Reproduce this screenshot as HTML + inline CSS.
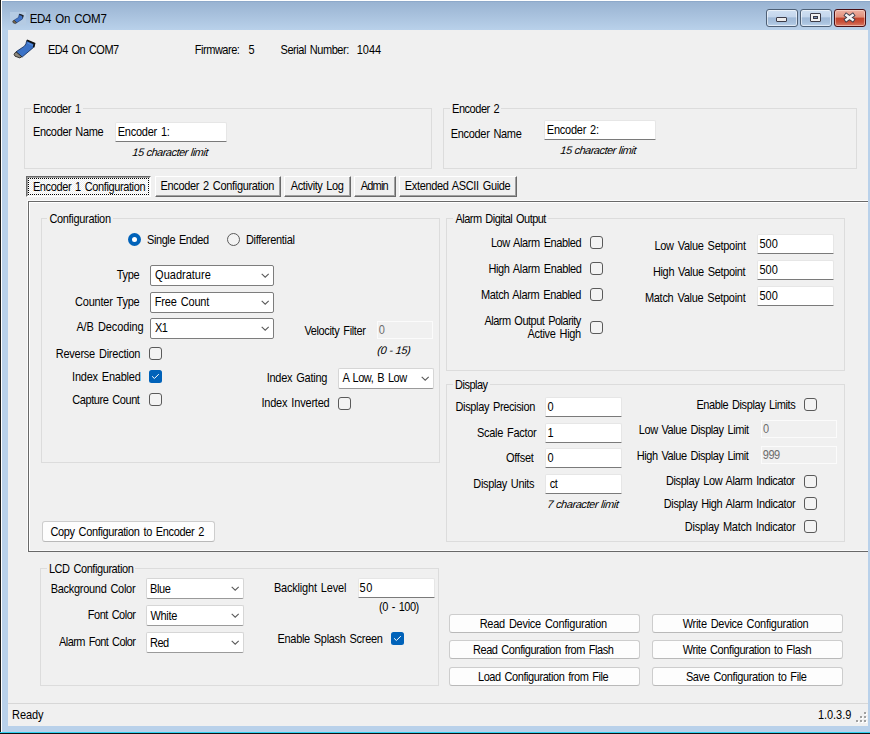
<!DOCTYPE html><html><head><meta charset="utf-8"><style>
html,body{margin:0;padding:0}
body{width:870px;height:734px;position:relative;overflow:hidden;background:#b9d1ea;font-family:"Liberation Sans",sans-serif}
.t{position:absolute;font-family:"Liberation Sans",sans-serif;font-size:11px;line-height:13px;transform:scaleY(1.12);transform-origin:0 10.3px;letter-spacing:-0.4px;word-spacing:1.2px;white-space:nowrap;color:#000}
.g{position:absolute;box-sizing:border-box;border:1px solid #dcdcdc}
.tb{position:absolute;box-sizing:border-box;background:#fff;border:1px solid #e6e6e6;border-bottom:1px solid #7a7a7a;border-radius:2px 2px 1px 1px}
.tbd{position:absolute;box-sizing:border-box;background:#f0f0f0;border:1px solid #fbfbfb}
.cb{position:absolute;box-sizing:border-box;background:#fff;border:1px solid #7d7d7d;border-radius:2px}
.cbl{position:absolute;box-sizing:border-box;background:#fff;border:1px solid #d6d6d6;border-bottom-color:#9a9a9a;border-radius:2px}
.btn{position:absolute;box-sizing:border-box;background:#fdfdfd;border:1px solid #cdcdcd;border-bottom-color:#b9b9b9;border-radius:3px}
.tab{position:absolute;box-sizing:border-box;background:#f0f0f0;border-top:1px solid #fff;border-left:1px solid #fff;border-right:1px solid #696969;border-bottom:1px solid #696969;box-shadow:inset -1px -1px 0 #a0a0a0}
.tabp{position:absolute;box-sizing:border-box;background:repeating-conic-gradient(#ffffff 0 25%, #ededed 0 50%) 0 0/2px 2px;border-top:1px solid #696969;border-left:1px solid #696969;border-right:1px solid #fff;border-bottom:1px solid #fff;box-shadow:inset 1px 1px 0 #a0a0a0}
.focus{position:absolute;box-sizing:border-box;border:1px dotted #000}
</style></head><body>
<div style="position:absolute;left:0px;top:0px;width:870px;height:30px;background:linear-gradient(#97b1d0,#b9d1ea)"></div>
<div style="position:absolute;left:0px;top:0px;width:870px;height:1px;background:#fff"></div>
<div style="position:absolute;left:0px;top:1px;width:870px;height:1px;background:#8ea9ca"></div>
<div style="position:absolute;left:0px;top:0px;width:1px;height:734px;background:#1c1c1c"></div>
<div style="position:absolute;left:1px;top:1px;width:1px;height:733px;background:#fff"></div>
<div style="position:absolute;left:0px;top:732px;width:870px;height:1px;background:#2fd0f0"></div>
<div style="position:absolute;left:0px;top:733px;width:870px;height:1px;background:#111"></div>
<div style="position:absolute;left:8px;top:30px;width:860px;height:696px;background:#f0f0f0"></div>
<div style="position:absolute;left:10px;top:12px;width:16px;height:13px;background:#b5cbe3"></div>
<svg style="position:absolute;left:8px;top:9px" width="20" height="19" viewBox="0 0 20 19"><path d="M11.3 5.3 L15 6.6 L14.4 10 L8.6 13.8 L6.2 11.2 L10.6 8.4 Z" fill="#3f73c8" stroke="#1f3f78" stroke-width="0.7"/><path d="M11.3 5.2 L15 6.6 L14.6 8.5" fill="none" stroke="#222" stroke-width="1.2"/><path d="M6.2 11.2 L8.6 13.8 L7.2 14.6 L5 13.6 L4.8 12 Z" fill="#7a6a50" stroke="#222" stroke-width="0.6"/></svg>
<div class="t" style="left:29.64px;top:12.7px;letter-spacing:-0.258px;font-size:11.5px;text-shadow:none;">ED4 On COM7</div>
<div style="position:absolute;left:766px;top:9px;width:32px;height:18px;box-sizing:border-box;border:1px solid #4e6076;border-radius:3px;background:linear-gradient(#d0e0f2 0%,#c3d6ec 45%,#9fb9d7 48%,#a9c2de 80%,#bcd3ec 100%);box-shadow:inset 0 0 0 1px rgba(255,255,255,0.55)"></div>
<div style="position:absolute;left:776px;top:17px;width:11px;height:5px;box-sizing:border-box;border:1px solid #3c3c48;background:#ececec;border-radius:1px"></div>
<div style="position:absolute;left:800px;top:9px;width:32px;height:18px;box-sizing:border-box;border:1px solid #4e6076;border-radius:3px;background:linear-gradient(#d0e0f2 0%,#c3d6ec 45%,#9fb9d7 48%,#a9c2de 80%,#bcd3ec 100%);box-shadow:inset 0 0 0 1px rgba(255,255,255,0.55)"></div>
<div style="position:absolute;left:810px;top:13px;width:11px;height:9px;box-sizing:border-box;border:1px solid #3c3c48;background:#f2f2f2;border-radius:1px"></div>
<div style="position:absolute;left:813px;top:16px;width:5px;height:3px;box-sizing:border-box;border:1px solid #3c3c48;background:#7d95ba"></div>
<div style="position:absolute;left:834px;top:9px;width:32px;height:18px;box-sizing:border-box;border:1px solid #4a0f14;border-radius:3px;background:linear-gradient(#eeb1a2 0%,#e08f7b 45%,#c3432a 50%,#c9503a 75%,#d97a66 100%);box-shadow:inset 0 0 0 1px rgba(255,230,220,0.5)"></div>
<svg style="position:absolute;left:843px;top:12px" width="13" height="11" viewBox="0 0 13 11"><path d="M3.4 3.2 L9.6 7.8 M9.6 3.2 L3.4 7.8" stroke="#3a3a48" stroke-width="4.2" stroke-linecap="square"/><path d="M3.4 3.2 L9.6 7.8 M9.6 3.2 L3.4 7.8" stroke="#f4f4f4" stroke-width="2.5" stroke-linecap="square"/></svg>
<svg style="position:absolute;left:8px;top:34px" width="32" height="28" viewBox="0 0 32 28"><path d="M18.8 6.4 L26.4 9.6 L25.5 13.4 L14.2 23 L8 17.8 L16.6 12 Q18.2 10 18.8 6.4 Z" fill="#3b72c6" stroke="#102a55" stroke-width="0.8"/><path d="M18.9 6.3 L26.5 9.6 L25.6 13.3" fill="none" stroke="#111" stroke-width="1.7"/><path d="M19.5 9 L25 11.5" stroke="#5d92e2" stroke-width="0.9" fill="none"/><path d="M8 17.8 L13.8 22.8 L11.8 23.9 L7 22.2 L6 20.2 Z" fill="#8d887c" stroke="#1a1a1a" stroke-width="0.8"/></svg>
<div class="t" style="left:48.00px;top:43.8px;letter-spacing:-0.520px;">ED4 On COM7</div>
<div class="t" style="left:194.80px;top:43.8px;letter-spacing:-0.475px;">Firmware:</div>
<div class="t" style="left:248.42px;top:43.8px;letter-spacing:0.800px;">5</div>
<div class="t" style="left:280.50px;top:43.8px;letter-spacing:-0.442px;">Serial Number:</div>
<div class="t" style="left:356.70px;top:43.8px;letter-spacing:-0.000px;">1044</div>
<div class="g" style="left:24px;top:108px;width:408px;height:61px"></div>
<div class="t" style="left:33.00px;top:102.8px;letter-spacing:-0.416px;background:#f0f0f0;padding:0 2px;margin-left:-2px;">Encoder 1</div>
<div class="t" style="left:33.00px;top:125.8px;letter-spacing:-0.360px;">Encoder Name</div>
<div class="tb" style="left:115px;top:122px;width:112px;height:20px"></div>
<div class="t" style="left:117.70px;top:126.1px;letter-spacing:-0.242px;">Encoder 1:</div>
<div class="t" style="left:131.60px;top:146.3px;letter-spacing:-0.519px;font-style:italic;word-spacing:0.5px;transform:skewX(-6deg);">15 character limit</div>
<div class="g" style="left:443px;top:108px;width:414px;height:61px"></div>
<div class="t" style="left:452.00px;top:102.8px;letter-spacing:-0.451px;background:#f0f0f0;padding:0 2px;margin-left:-2px;">Encoder 2</div>
<div class="t" style="left:450.70px;top:127.8px;letter-spacing:-0.311px;">Encoder Name</div>
<div class="tb" style="left:544px;top:120px;width:112px;height:20px"></div>
<div class="t" style="left:546.80px;top:124.1px;letter-spacing:-0.245px;">Encoder 2:</div>
<div class="t" style="left:559.70px;top:144.2px;letter-spacing:-0.520px;font-style:italic;word-spacing:0.5px;transform:skewX(-6deg);">15 character limit</div>
<div style="position:absolute;left:27px;top:200px;width:841px;height:1px;background:#fbfbfb"></div>
<div style="position:absolute;left:27px;top:200px;width:1px;height:352px;background:#fbfbfb"></div>
<div style="position:absolute;left:28px;top:201px;width:840px;height:1px;background:#696969"></div>
<div style="position:absolute;left:28px;top:201px;width:1px;height:351px;background:#696969"></div>
<div style="position:absolute;left:28px;top:551px;width:840px;height:1px;background:#696969"></div>
<div style="position:absolute;left:29px;top:202px;width:839px;height:1px;background:#fff"></div>
<div style="position:absolute;left:29px;top:202px;width:1px;height:349px;background:#fff"></div>
<div style="position:absolute;left:29px;top:550px;width:839px;height:1px;background:#fafafa"></div>
<div class="tabp" style="left:26px;top:176px;width:125px;height:21px"></div>
<div class="focus" style="left:28px;top:178px;width:121px;height:17px"></div>
<div class="t" style="left:32.90px;top:181.0px;letter-spacing:-0.382px;">Encoder 1 Configuration</div>
<div class="tab" style="left:155px;top:176px;width:126px;height:21px"></div>
<div class="t" style="left:160.50px;top:179.9px;letter-spacing:-0.326px;">Encoder 2 Configuration</div>
<div class="tab" style="left:284px;top:176px;width:67px;height:21px"></div>
<div class="t" style="left:290.80px;top:179.9px;letter-spacing:-0.401px;">Activity Log</div>
<div class="tab" style="left:354px;top:176px;width:42px;height:21px"></div>
<div class="t" style="left:360.70px;top:179.9px;letter-spacing:-0.800px;">Admin</div>
<div class="tab" style="left:399px;top:176px;width:118px;height:21px"></div>
<div class="t" style="left:404.80px;top:179.9px;letter-spacing:-0.348px;">Extended ASCII Guide</div>
<div class="g" style="left:41px;top:218px;width:399px;height:245px"></div>
<div class="t" style="left:49.40px;top:213.0px;letter-spacing:-0.316px;background:#f0f0f0;padding:0 2px;margin-left:-2px;">Configuration</div>
<svg style="position:absolute;left:128px;top:233px" width="13" height="13" viewBox="0 0 13 13"><circle cx="6.5" cy="6.5" r="6.5" fill="#0062b9"/><circle cx="6.5" cy="6.5" r="2.5" fill="#fff"/></svg>
<div class="t" style="left:147.00px;top:233.8px;letter-spacing:-0.417px;">Single Ended</div>
<svg style="position:absolute;left:227px;top:233px" width="13" height="13" viewBox="0 0 13 13"><circle cx="6.5" cy="6.5" r="6" fill="#f3f3f3" stroke="#5a5a5a" stroke-width="1"/></svg>
<div class="t" style="left:245.90px;top:233.8px;letter-spacing:-0.295px;">Differential</div>
<div class="t" style="left:116.70px;top:269.0px;letter-spacing:-0.267px;">Type</div>
<div class="cb" style="left:150px;top:265px;width:124px;height:21px"></div>
<div class="t" style="left:155.10px;top:268.6px;letter-spacing:0.002px;">Quadrature</div>
<div style="position:absolute;left:261px;top:273px;line-height:0"><svg width="9" height="6" viewBox="0 0 9 6"><path d="M0.7 0.9 L4.2 4.2 L7.7 0.9" fill="none" stroke="#5a5a5a" stroke-width="1.1"/></svg></div>
<div class="t" style="left:75.00px;top:295.8px;letter-spacing:-0.214px;">Counter Type</div>
<div class="cb" style="left:150px;top:292px;width:124px;height:21px"></div>
<div class="t" style="left:154.70px;top:295.6px;letter-spacing:-0.176px;">Free Count</div>
<div style="position:absolute;left:261px;top:300px;line-height:0"><svg width="9" height="6" viewBox="0 0 9 6"><path d="M0.7 0.9 L4.2 4.2 L7.7 0.9" fill="none" stroke="#5a5a5a" stroke-width="1.1"/></svg></div>
<div class="t" style="left:76.40px;top:320.6px;letter-spacing:-0.110px;">A/B Decoding</div>
<div class="cb" style="left:150px;top:318px;width:124px;height:21px"></div>
<div class="t" style="left:155.10px;top:321.6px;letter-spacing:-0.580px;">X1</div>
<div style="position:absolute;left:261px;top:326px;line-height:0"><svg width="9" height="6" viewBox="0 0 9 6"><path d="M0.7 0.9 L4.2 4.2 L7.7 0.9" fill="none" stroke="#5a5a5a" stroke-width="1.1"/></svg></div>
<div class="t" style="left:304.40px;top:325.3px;letter-spacing:-0.361px;">Velocity Filter</div>
<div class="tbd" style="left:377px;top:321px;width:56px;height:18px"></div>
<div class="t" style="left:378.70px;top:324.0px;letter-spacing:-0.400px;color:#6d6d6d;">0</div>
<div class="t" style="left:376.60px;top:344.0px;letter-spacing:-0.448px;font-style:italic;word-spacing:0.5px;transform:skewX(-6deg);">(0 - 15)</div>
<div class="t" style="left:55.80px;top:348.0px;letter-spacing:-0.253px;">Reverse Direction</div>
<svg style="position:absolute;left:149px;top:347px" width="13" height="13" viewBox="0 0 13 13"><rect x="0.5" y="0.5" width="12" height="12" rx="2.5" fill="#f3f3f3" stroke="#5a5a5a" stroke-width="1"/></svg>
<div class="t" style="left:72.10px;top:371.0px;letter-spacing:-0.233px;">Index Enabled</div>
<svg style="position:absolute;left:149px;top:370px" width="13" height="13" viewBox="0 0 13 13"><rect x="0" y="0" width="13" height="13" rx="2.5" fill="#0062b9"/><path d="M3.1 6.3 L5.4 8.5 L9.8 4.1" fill="none" stroke="#fff" stroke-width="1"/></svg>
<div class="t" style="left:72.28px;top:394.1px;letter-spacing:-0.425px;">Capture Count</div>
<svg style="position:absolute;left:149px;top:393px" width="13" height="13" viewBox="0 0 13 13"><rect x="0.5" y="0.5" width="12" height="12" rx="2.5" fill="#f3f3f3" stroke="#5a5a5a" stroke-width="1"/></svg>
<div class="t" style="left:266.70px;top:372.4px;letter-spacing:-0.261px;">Index Gating</div>
<div class="cbl" style="left:338px;top:368px;width:96px;height:21px"></div>
<div class="t" style="left:342.40px;top:372.4px;letter-spacing:-0.437px;">A Low, B Low</div>
<div style="position:absolute;left:421px;top:376px;line-height:0"><svg width="9" height="6" viewBox="0 0 9 6"><path d="M0.7 0.9 L4.2 4.2 L7.7 0.9" fill="none" stroke="#5a5a5a" stroke-width="1.1"/></svg></div>
<div class="t" style="left:261.40px;top:397.0px;letter-spacing:-0.197px;">Index Inverted</div>
<svg style="position:absolute;left:338px;top:397px" width="13" height="13" viewBox="0 0 13 13"><rect x="0.5" y="0.5" width="12" height="12" rx="2.5" fill="#f3f3f3" stroke="#5a5a5a" stroke-width="1"/></svg>
<div class="btn" style="left:42px;top:521px;width:173px;height:21px"></div>
<div class="t" style="left:50.40px;top:526.0px;letter-spacing:-0.347px;">Copy Configuration to Encoder 2</div>
<div class="g" style="left:446px;top:218px;width:399px;height:153px"></div>
<div class="t" style="left:455.40px;top:213.0px;letter-spacing:-0.515px;background:#f0f0f0;padding:0 2px;margin-left:-2px;">Alarm Digital Output</div>
<div class="t" style="left:490.90px;top:237.4px;letter-spacing:-0.406px;">Low Alarm Enabled</div>
<svg style="position:absolute;left:590px;top:236px" width="13" height="13" viewBox="0 0 13 13"><rect x="0.5" y="0.5" width="12" height="12" rx="2.5" fill="#f3f3f3" stroke="#5a5a5a" stroke-width="1"/></svg>
<div class="t" style="left:488.40px;top:263.3px;letter-spacing:-0.358px;">High Alarm Enabled</div>
<svg style="position:absolute;left:590px;top:262px" width="13" height="13" viewBox="0 0 13 13"><rect x="0.5" y="0.5" width="12" height="12" rx="2.5" fill="#f3f3f3" stroke="#5a5a5a" stroke-width="1"/></svg>
<div class="t" style="left:480.90px;top:289.0px;letter-spacing:-0.358px;">Match Alarm Enabled</div>
<svg style="position:absolute;left:590px;top:288px" width="13" height="13" viewBox="0 0 13 13"><rect x="0.5" y="0.5" width="12" height="12" rx="2.5" fill="#f3f3f3" stroke="#5a5a5a" stroke-width="1"/></svg>
<div class="t" style="left:484.40px;top:315.4px;letter-spacing:-0.500px;">Alarm Output Polarity</div>
<div class="t" style="left:527.40px;top:328.1px;letter-spacing:-0.300px;">Active High</div>
<svg style="position:absolute;left:590px;top:321px" width="13" height="13" viewBox="0 0 13 13"><rect x="0.5" y="0.5" width="12" height="12" rx="2.5" fill="#f3f3f3" stroke="#5a5a5a" stroke-width="1"/></svg>
<div class="t" style="left:654.40px;top:240.3px;letter-spacing:-0.282px;">Low Value Setpoint</div>
<div class="tb" style="left:757px;top:234px;width:77px;height:20px"></div>
<div class="t" style="left:759.40px;top:238.4px;letter-spacing:0.100px;">500</div>
<div class="t" style="left:652.90px;top:266.2px;letter-spacing:-0.335px;">High Value Setpoint</div>
<div class="tb" style="left:757px;top:260px;width:77px;height:20px"></div>
<div class="t" style="left:759.40px;top:264.4px;letter-spacing:0.100px;">500</div>
<div class="t" style="left:644.90px;top:292.2px;letter-spacing:-0.279px;">Match Value Setpoint</div>
<div class="tb" style="left:757px;top:286px;width:77px;height:20px"></div>
<div class="t" style="left:759.40px;top:290.4px;letter-spacing:0.100px;">500</div>
<div class="g" style="left:446px;top:384px;width:399px;height:158px"></div>
<div class="t" style="left:455.00px;top:379.4px;letter-spacing:-0.500px;background:#f0f0f0;padding:0 2px;margin-left:-2px;">Display</div>
<div class="t" style="left:455.50px;top:401.3px;letter-spacing:-0.361px;">Display Precision</div>
<div class="tb" style="left:545px;top:397px;width:77px;height:20px"></div>
<div class="t" style="left:547.40px;top:401.4px;letter-spacing:-0.400px;">0</div>
<div class="t" style="left:477.00px;top:427.0px;letter-spacing:-0.292px;">Scale Factor</div>
<div class="tb" style="left:545px;top:423px;width:77px;height:20px"></div>
<div class="t" style="left:547.40px;top:427.4px;letter-spacing:-0.400px;">1</div>
<div class="t" style="left:505.90px;top:451.8px;letter-spacing:-0.240px;">Offset</div>
<div class="tb" style="left:545px;top:448px;width:77px;height:20px"></div>
<div class="t" style="left:547.40px;top:452.4px;letter-spacing:-0.400px;">0</div>
<div class="t" style="left:473.30px;top:478.0px;letter-spacing:-0.350px;">Display Units</div>
<div class="tb" style="left:545px;top:474px;width:77px;height:20px"></div>
<div class="t" style="left:549.70px;top:478.4px;letter-spacing:-0.400px;">ct</div>
<div class="t" style="left:547.00px;top:498.1px;letter-spacing:-0.445px;font-style:italic;word-spacing:0.5px;transform:skewX(-6deg);">7 character limit</div>
<div class="t" style="left:696.40px;top:398.9px;letter-spacing:-0.410px;">Enable Display Limits</div>
<svg style="position:absolute;left:804px;top:398px" width="13" height="13" viewBox="0 0 13 13"><rect x="0.5" y="0.5" width="12" height="12" rx="2.5" fill="#f3f3f3" stroke="#5a5a5a" stroke-width="1"/></svg>
<div class="t" style="left:638.80px;top:423.7px;letter-spacing:-0.427px;">Low Value Display Limit</div>
<div class="tbd" style="left:761px;top:420px;width:76px;height:18px"></div>
<div class="t" style="left:763.00px;top:423.4px;letter-spacing:-0.400px;color:#6d6d6d;">0</div>
<div class="t" style="left:636.80px;top:450.3px;letter-spacing:-0.431px;">High Value Display Limit</div>
<div class="tbd" style="left:761px;top:446px;width:76px;height:18px"></div>
<div class="t" style="left:762.70px;top:449.4px;letter-spacing:-0.400px;color:#6d6d6d;">999</div>
<div class="t" style="left:665.90px;top:474.8px;letter-spacing:-0.382px;">Display Low Alarm Indicator</div>
<svg style="position:absolute;left:804px;top:475px" width="13" height="13" viewBox="0 0 13 13"><rect x="0.5" y="0.5" width="12" height="12" rx="2.5" fill="#f3f3f3" stroke="#5a5a5a" stroke-width="1"/></svg>
<div class="t" style="left:663.80px;top:498.0px;letter-spacing:-0.369px;">Display High Alarm Indicator</div>
<svg style="position:absolute;left:804px;top:497px" width="13" height="13" viewBox="0 0 13 13"><rect x="0.5" y="0.5" width="12" height="12" rx="2.5" fill="#f3f3f3" stroke="#5a5a5a" stroke-width="1"/></svg>
<div class="t" style="left:684.80px;top:520.8px;letter-spacing:-0.268px;">Display Match Indicator</div>
<svg style="position:absolute;left:804px;top:520px" width="13" height="13" viewBox="0 0 13 13"><rect x="0.5" y="0.5" width="12" height="12" rx="2.5" fill="#f3f3f3" stroke="#5a5a5a" stroke-width="1"/></svg>
<div class="g" style="left:40px;top:568px;width:399px;height:118px"></div>
<div class="t" style="left:48.90px;top:562.6px;letter-spacing:-0.426px;background:#f0f0f0;padding:0 2px;margin-left:-2px;">LCD Configuration</div>
<div class="t" style="left:50.70px;top:582.7px;letter-spacing:-0.293px;">Background Color</div>
<div class="cbl" style="left:146px;top:578px;width:98px;height:21px"></div>
<div class="t" style="left:150.00px;top:582.6px;letter-spacing:-0.401px;">Blue</div>
<div style="position:absolute;left:230.5px;top:586px;line-height:0"><svg width="9" height="6" viewBox="0 0 9 6"><path d="M0.7 0.9 L4.2 4.2 L7.7 0.9" fill="none" stroke="#5a5a5a" stroke-width="1.1"/></svg></div>
<div class="t" style="left:87.80px;top:608.7px;letter-spacing:-0.487px;">Font Color</div>
<div class="cbl" style="left:146px;top:605px;width:98px;height:21px"></div>
<div class="t" style="left:150.40px;top:609.6px;letter-spacing:-0.300px;">White</div>
<div style="position:absolute;left:230.5px;top:613px;line-height:0"><svg width="9" height="6" viewBox="0 0 9 6"><path d="M0.7 0.9 L4.2 4.2 L7.7 0.9" fill="none" stroke="#5a5a5a" stroke-width="1.1"/></svg></div>
<div class="t" style="left:59.10px;top:635.8px;letter-spacing:-0.573px;">Alarm Font Color</div>
<div class="cbl" style="left:146px;top:632px;width:98px;height:21px"></div>
<div class="t" style="left:150.00px;top:636.6px;letter-spacing:-0.500px;">Red</div>
<div style="position:absolute;left:230.5px;top:640px;line-height:0"><svg width="9" height="6" viewBox="0 0 9 6"><path d="M0.7 0.9 L4.2 4.2 L7.7 0.9" fill="none" stroke="#5a5a5a" stroke-width="1.1"/></svg></div>
<div class="t" style="left:273.90px;top:582.1px;letter-spacing:-0.196px;">Backlight Level</div>
<div class="tb" style="left:358px;top:578px;width:77px;height:20px"></div>
<div class="t" style="left:359.40px;top:582.4px;letter-spacing:0.800px;">50</div>
<div class="t" style="left:379.10px;top:601.2px;letter-spacing:-0.475px;">(0 - 100)</div>
<div class="t" style="left:277.50px;top:633.3px;letter-spacing:-0.310px;">Enable Splash Screen</div>
<svg style="position:absolute;left:391px;top:632px" width="13" height="13" viewBox="0 0 13 13"><rect x="0" y="0" width="13" height="13" rx="2.5" fill="#0062b9"/><path d="M3.1 6.3 L5.4 8.5 L9.8 4.1" fill="none" stroke="#fff" stroke-width="1"/></svg>
<div class="btn" style="left:449px;top:614px;width:191px;height:19px"></div>
<div class="t" style="left:479.70px;top:618.3px;letter-spacing:-0.266px;">Read Device Configuration</div>
<div class="btn" style="left:449px;top:640px;width:191px;height:19px"></div>
<div class="t" style="left:473.00px;top:644.3px;letter-spacing:-0.446px;">Read Configuration from Flash</div>
<div class="btn" style="left:449px;top:667px;width:191px;height:19px"></div>
<div class="t" style="left:478.00px;top:670.9px;letter-spacing:-0.432px;">Load Configuration from File</div>
<div class="btn" style="left:652px;top:614px;width:191px;height:19px"></div>
<div class="t" style="left:682.70px;top:618.3px;letter-spacing:-0.285px;">Write Device Configuration</div>
<div class="btn" style="left:652px;top:640px;width:191px;height:19px"></div>
<div class="t" style="left:682.70px;top:644.3px;letter-spacing:-0.400px;">Write Configuration to Flash</div>
<div class="btn" style="left:652px;top:667px;width:191px;height:19px"></div>
<div class="t" style="left:685.90px;top:670.9px;letter-spacing:-0.366px;">Save Configuration to File</div>
<div style="position:absolute;left:8px;top:703px;width:860px;height:1px;background:#d7d7d7"></div>
<div class="t" style="left:12.00px;top:708.7px;letter-spacing:-0.050px;">Ready</div>
<div class="t" style="left:817.90px;top:709.2px;letter-spacing:-0.033px;">1.0.3.9</div>
<div style="position:absolute;left:865px;top:713px;width:2px;height:2px;background:#fff"></div>
<div style="position:absolute;left:861px;top:717px;width:2px;height:2px;background:#fff"></div>
<div style="position:absolute;left:865px;top:717px;width:2px;height:2px;background:#fff"></div>
<div style="position:absolute;left:857px;top:721px;width:2px;height:2px;background:#fff"></div>
<div style="position:absolute;left:861px;top:721px;width:2px;height:2px;background:#fff"></div>
<div style="position:absolute;left:865px;top:721px;width:2px;height:2px;background:#fff"></div>
<div style="position:absolute;left:864px;top:712px;width:2px;height:2px;background:#a0a0a0"></div>
<div style="position:absolute;left:860px;top:716px;width:2px;height:2px;background:#a0a0a0"></div>
<div style="position:absolute;left:864px;top:716px;width:2px;height:2px;background:#a0a0a0"></div>
<div style="position:absolute;left:856px;top:720px;width:2px;height:2px;background:#a0a0a0"></div>
<div style="position:absolute;left:860px;top:720px;width:2px;height:2px;background:#a0a0a0"></div>
<div style="position:absolute;left:864px;top:720px;width:2px;height:2px;background:#a0a0a0"></div>
</body></html>
